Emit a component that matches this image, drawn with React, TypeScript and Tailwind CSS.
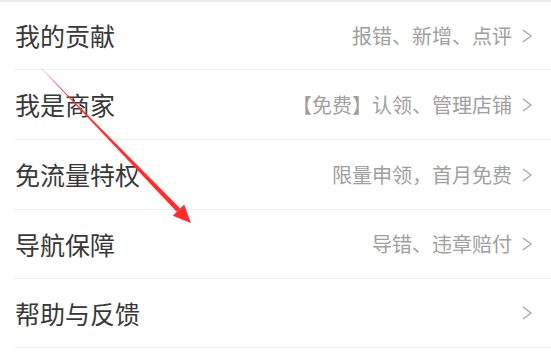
const rows = [
  { title: "我的贡献", hint: "报错、新增、点评", h: "h-[68px]" },
  { title: "我是商家", hint: "【免费】认领、管理店铺", h: "h-[70px]" },
  { title: "免流量特权", hint: "限量申领，首月免费", h: "h-[70px]" },
  { title: "导航保障", hint: "导错、违章赔付", h: "h-[69px]" },
  { title: "帮助与反馈", hint: "", h: "h-[69px]" },
];

function Chevron() {
  return (
    <svg viewBox="0 0 10 14" className="h-[14px] w-[10px] shrink-0" fill="none">
      <path d="M1 1 L9 7 L1 13" stroke="#a3a3a3" strokeWidth="1.2" />
    </svg>
  );
}

export default function App() {
  return (
    <div
      className="relative h-[361px] w-[551px] overflow-hidden border-t-2 border-[#ececec] bg-white"
      style={{ fontFamily: '"Noto Sans CJK SC", "Noto Sans", sans-serif' }}
    >
      <ul className="pl-[14px]">
        {rows.map((r) => (
          <li
            key={r.title}
            className={`flex items-center justify-between border-b border-[#eeeeee] pl-px pr-[19px] ${r.h}`}
          >
            <span className="text-[25px] leading-none text-[#383838]">{r.title}</span>
            <span className="flex items-center gap-[10px]">
              {r.hint && (
                <span className="text-[20px] leading-none text-[#a0a0a0]">{r.hint}</span>
              )}
              <Chevron />
            </span>
          </li>
        ))}
      </ul>

      {/* red annotation arrow */}
      <svg
        aria-hidden
        viewBox="0 0 551 361"
        className="pointer-events-none absolute left-0 top-[-2px] h-[361px] w-[551px]"
      >
        <polygon
          points="40.7,67.7 41.3,68.3 180.3,208.4 176.7,211.8"
          fill="#ff2d2d"
        />
        <polygon points="191,223 172.8,215.7 184.2,204.5" fill="#ff2d2d" />
      </svg>
    </div>
  );
}
